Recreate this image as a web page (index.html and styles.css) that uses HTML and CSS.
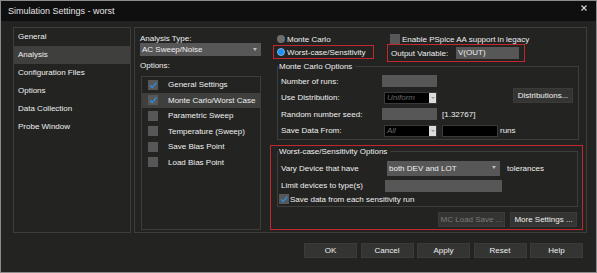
FILE: index.html
```html
<!DOCTYPE html>
<html lang="en">
<head>
  <meta charset="UTF-8">
  <title>Simulation Settings - worst</title>
  <link rel="stylesheet" href="styles.css">
</head>
<body>
  <div class="window">
    <div class="titlebar">
      <span class="title">Simulation Settings - worst</span>
      <svg class="close" width="6" height="6" viewBox="0 0 6 6"><path d="M0.5 0.5L5.5 5.5M5.5 0.5L0.5 5.5" stroke="#d8d8d8" stroke-width="1.1"/></svg>
    </div>

    <div class="main">
      <ul class="nav">
        <li>General</li>
        <li class="active">Analysis</li>
        <li>Configuration Files</li>
        <li>Options</li>
        <li>Data Collection</li>
        <li>Probe Window</li>
      </ul>

      <div class="panel">
        <div class="col-analysis">
          <div class="lbl">Analysis Type:</div>
          <div class="combo">AC Sweep/Noise<span class="arrow"></span></div>
          <div class="lbl opt-lbl">Options:</div>
          <ul class="opts">
            <li><span class="check"><svg viewBox="0 0 10 10"><path d="M2.2 5.4L4.2 7.6L8.3 2.6" fill="none" stroke="#2593f0" stroke-width="1.3"/></svg></span>General Settings</li>
            <li class="active"><span class="check"><svg viewBox="0 0 10 10"><path d="M2.2 5.4L4.2 7.6L8.3 2.6" fill="none" stroke="#2593f0" stroke-width="1.3"/></svg></span>Monte Carlo/Worst Case</li>
            <li><span class="check"></span>Parametric Sweep</li>
            <li><span class="check"></span>Temperature (Sweep)</li>
            <li><span class="check"></span>Save Bias Point</li>
            <li><span class="check"></span>Load Bias Point</li>
          </ul>
        </div>

        <div class="col-settings">
          <div class="modes">
            <div class="cell"><span class="radio"></span>Monte Carlo</div>
            <div class="cell cell-b"><span class="check"></span>Enable PSpice AA support in legacy</div>
            <div class="redbox mode-wc"><span class="radio on"></span>Worst-case/Sensitivity</div>
            <div class="redbox outvar">Output Variable:<span class="field outvar-field">V(OUT)</span></div>
          </div>

          <fieldset class="group mc">
            <legend>Monte Carlo Options</legend>
            <div class="mc-grid">
              <span>Number of runs:</span>
              <span class="field mc-field"></span>
              <span></span>

              <span>Use Distribution:</span>
              <span class="dcombo">Uniform<span class="dbtn"></span></span>
              <button class="btn dist-btn">Distributions...</button>

              <span>Random number seed:</span>
              <span class="field mc-field"></span>
              <span>[1.32767]</span>

              <span>Save Data From:</span>
              <span class="dcombo">All<span class="dbtn"></span></span>
              <span class="runs"><span class="black-field"></span>runs</span>
            </div>
          </fieldset>

          <div class="redbox wc">
            <fieldset class="group">
              <legend>Worst-case/Sensitivity Options</legend>
              <div class="wc-grid">
                <span>Vary Device that have</span>
                <span class="combo wc-combo">both DEV and LOT<span class="arrow"></span></span>
                <span class="tol">tolerances</span>

                <span>Limit devices to type(s)</span>
                <span class="field wc-field"></span>
                <span></span>
              </div>
              <div class="check-row"><span class="check"><svg viewBox="0 0 10 10"><path d="M2.2 5.4L4.2 7.6L8.3 2.6" fill="none" stroke="#2593f0" stroke-width="1.3"/></svg></span>Save data from each sensitivity run</div>
            </fieldset>
            <div class="btn-row">
              <button class="btn" disabled>MC Load Save ...</button>
              <button class="btn">More Settings ...</button>
            </div>
          </div>
        </div>
      </div>
    </div>

    <div class="footer">
      <button class="btn">OK</button>
      <button class="btn">Cancel</button>
      <button class="btn">Apply</button>
      <button class="btn">Reset</button>
      <button class="btn">Help</button>
    </div>
  </div>
</body>
</html>
```

FILE: styles.css
```css
* {
  box-sizing: border-box;
}
body {
  margin: 0;
  background: #232422;
  font-family: "Liberation Sans", Arial, sans-serif;
  font-size: 8px;
  color: #efefef;
}
.window {
  width: 597px;
  height: 273px;
  border: 1px solid #8c8c8c;
  background: #232422;
}
.titlebar {
  height: 20px;
  background: #0f0f0f;
  display: flex;
  justify-content: space-between;
  align-items: center;
  padding: 0 9px 0 7px;
}
.title {
  font-size: 9px;
  color: #e4e4e4;
}
.close {
  align-self: flex-start;
  margin-top: 4px;
}
.main {
  display: flex;
  gap: 3px;
  padding: 6px 0 0 12px;
}

/* left navigation */
.nav {
  width: 118px;
  height: 206px;
  margin: 0;
  padding: 0;
  list-style: none;
  border: 1px solid #3d3e3c;
}
.nav li {
  height: 18px;
  line-height: 18px;
  padding-left: 4px;
}
.nav li.active {
  background: #3f403e;
}

/* right panel */
.panel {
  width: 453px;
  height: 206px;
  border: 1px solid #3d3e3c;
  display: flex;
  padding: 0 0 2px 5px;
}
.col-analysis {
  width: 121px;
  display: flex;
  flex-direction: column;
  padding-top: 6px;
}
.lbl {
  line-height: 10px;
}
.opt-lbl {
  margin-top: 5px;
}
.combo {
  position: relative;
  display: block;
  height: 13px;
  margin-top: -1px;
  padding-left: 2px;
  line-height: 13px;
  background: #575757;
}
.arrow {
  position: absolute;
  right: 4px;
  top: 5px;
  border-left: 2.5px solid transparent;
  border-right: 2.5px solid transparent;
  border-top: 3px solid #bdbdbd;
}
.opts {
  flex: 1;
  margin: 5px 0 0 1px;
  padding: 0;
  list-style: none;
  border: 1px solid #3d3e3c;
}
.opts li {
  height: 15.5px;
  display: flex;
  align-items: center;
  padding-left: 6px;
}
.opts li.active {
  background: #3f403e;
}
.check {
  flex: none;
  display: inline-flex;
  width: 10px;
  height: 10px;
  margin-right: 10px;
  background: #575757;
}
.check svg {
  width: 10px;
  height: 10px;
}

.col-settings {
  width: 313px;
  margin-left: 9px;
}
.modes {
  display: grid;
  grid-template-columns: 114px 1fr;
  padding: 6px 0 0 3px;
}
.cell {
  height: 10px;
  display: flex;
  align-items: center;
  padding-left: 4px;
}
.cell-b {
  padding-left: 3px;
}
.cell-b .check {
  margin-right: 2px;
}
.radio {
  flex: none;
  width: 8px;
  height: 8px;
  margin-right: 2px;
  border-radius: 50%;
  background: #6e6e6e;
}
.radio.on {
  background: #1d8ff2;
  border: 1px solid #79aee0;
}
.redbox {
  border: 1px solid #c1272d;
}
.mode-wc {
  width: 101px;
  height: 14px;
  margin-top: 1px;
  display: flex;
  align-items: center;
  padding-left: 3px;
}
.outvar {
  width: 138px;
  height: 18px;
  display: flex;
  align-items: center;
  padding-left: 3px;
}
.field {
  display: block;
  height: 12px;
  line-height: 12px;
  padding-left: 2px;
  background: #575757;
}
.outvar-field {
  width: 63px;
  margin: 0 5px 0 auto;
}

/* group boxes */
.group {
  margin: 0;
  padding: 0;
  min-width: 0;
  border: 1px solid #3d3e3c;
}
.group legend {
  padding: 0 3px 0 1px;
  line-height: 9px;
}
.mc {
  width: 302px;
  margin-left: 7px;
}
.mc-grid {
  display: grid;
  grid-template-columns: 101px 60px 1fr;
  grid-auto-rows: 16.5px;
  align-items: center;
  padding: 2px 0 0 3px;
}
.mc-field {
  width: 55px;
}
.dcombo {
  position: relative;
  width: 53px;
  height: 12px;
  margin-left: 2px;
  padding-left: 2px;
  line-height: 10px;
  background: #000;
  border: 1px solid #3a3a3a;
  color: #6a6a6a;
  font-style: italic;
}
.dbtn {
  position: absolute;
  right: 0;
  top: 0;
  width: 7px;
  height: 10px;
  background: #dcdcdc;
}
.dbtn::after {
  content: "";
  position: absolute;
  left: 1.5px;
  top: 4px;
  border-left: 2px solid transparent;
  border-right: 2px solid transparent;
  border-top: 2px solid #9a9a9a;
}
.btn {
  height: 15px;
  padding: 0;
  font: inherit;
  color: #efefef;
  background: #343533;
  border: 1px solid #3b3c3a;
}
.btn:disabled {
  color: #7a7a7a;
}
.dist-btn {
  width: 60px;
  justify-self: end;
  margin: -4px 5px 0 0;
}
.runs {
  display: flex;
  align-items: center;
}
.black-field {
  width: 56px;
  height: 12px;
  margin-right: 2px;
  background: #000;
  border: 1px solid #3a3a3a;
}

.wc {
  margin-top: 5px;
  padding: 1px 4px 2px 6px;
}
.wc-grid {
  display: grid;
  grid-template-columns: 106px 113px auto;
  grid-template-rows: 18px 17px;
  align-items: center;
  padding: 3px 0 0 3px;
}
.wc-combo {
  height: 15px;
  line-height: 15px;
  margin: 0;
}
.tol {
  margin-left: 7px;
}
.wc-field {
  width: 117px;
  margin-left: -2px;
}
.check-row {
  height: 10px;
  display: flex;
  align-items: center;
  padding-left: 1px;
  margin-bottom: 2px;
}
.check-row .check {
  margin-right: 1px;
}
.btn-row {
  display: flex;
  justify-content: flex-end;
  gap: 5px;
  margin: 5px 1px 0 0;
}
.btn-row .btn {
  width: 67px;
}

.footer {
  display: flex;
  justify-content: flex-end;
  gap: 3.5px;
  padding: 10px 13px 0 0;
}
.footer .btn {
  width: 53px;
}
```
